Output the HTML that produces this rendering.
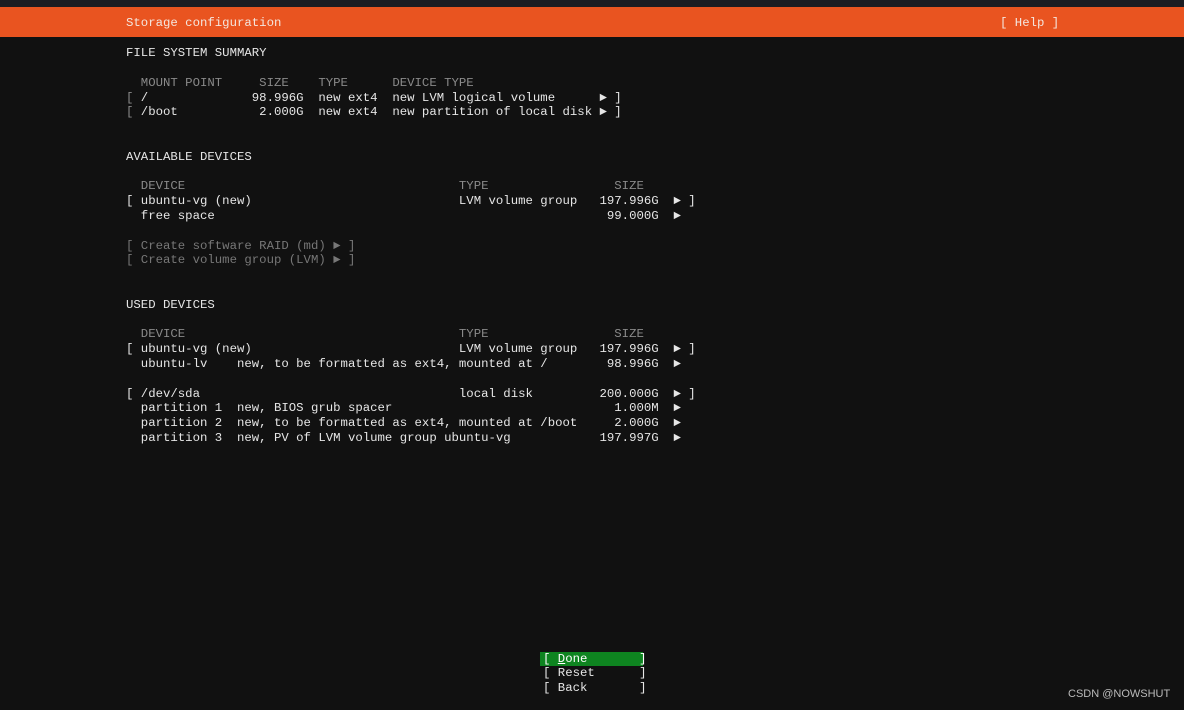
<!DOCTYPE html>
<html><head><meta charset="utf-8"><style>
html,body{margin:0;padding:0;width:1184px;height:710px;background:#111111;overflow:hidden}
body{position:relative;font-family:"Liberation Mono",monospace;font-size:12.33px;color:#e6e6e6}
.top{position:absolute;left:0;top:0;width:1184px;height:7px;background:#1c1c22}
.bar{position:absolute;left:0;top:7px;width:1184px;height:30px;background:#e95420;color:#f4e6de}
.bar span{position:absolute;top:8px;line-height:16px;white-space:pre}
pre{position:absolute;left:126px;margin:0;font:inherit;line-height:14.8px;white-space:pre}
.g{color:#8a8a8a}.d{color:#777}
.btn{position:absolute;left:540px;width:100px;padding-left:3px;height:14.8px;line-height:14.8px;white-space:pre}
.wm{position:absolute;left:1068px;top:688px;font-family:"Liberation Sans",sans-serif;font-size:11px;color:#bbb}
</style></head><body>
<div class="top"></div>
<div class="bar"><span style="left:126px">Storage configuration</span><span style="left:1000px">[ Help ]</span></div>
<pre style="top:46.2px">FILE SYSTEM SUMMARY

<span class="g">  MOUNT POINT     SIZE    TYPE      DEVICE TYPE</span>
<span class="g">[</span> /              98.996G  new ext4  new LVM logical volume      ► ]
<span class="g">[</span> /boot           2.000G  new ext4  new partition of local disk ► ]


AVAILABLE DEVICES

<span class="g">  DEVICE                                     TYPE                 SIZE</span>
[ ubuntu-vg (new)                            LVM volume group   197.996G  ► ]
  free space                                                     99.000G  ►

<span class="d">[ Create software RAID (md) ► ]</span>
<span class="d">[ Create volume group (LVM) ► ]</span>


USED DEVICES

<span class="g">  DEVICE                                     TYPE                 SIZE</span>
[ ubuntu-vg (new)                            LVM volume group   197.996G  ► ]
  ubuntu-lv    new, to be formatted as ext4, mounted at /        98.996G  ►

[ /dev/sda                                   local disk         200.000G  ► ]
  partition 1  new, BIOS grub spacer                              1.000M  ►
  partition 2  new, to be formatted as ext4, mounted at /boot     2.000G  ►
  partition 3  new, PV of LVM volume group ubuntu-vg            197.997G  ►</pre>
<div class="btn" style="top:651.6px;background:#0e8420;color:#fff">[ <u>D</u>one       ]</div>
<div class="btn" style="top:666.4px">[ Reset      ]</div>
<div class="btn" style="top:681.2px">[ Back       ]</div>
<div class="wm">CSDN @NOWSHUT</div>
</body></html>
